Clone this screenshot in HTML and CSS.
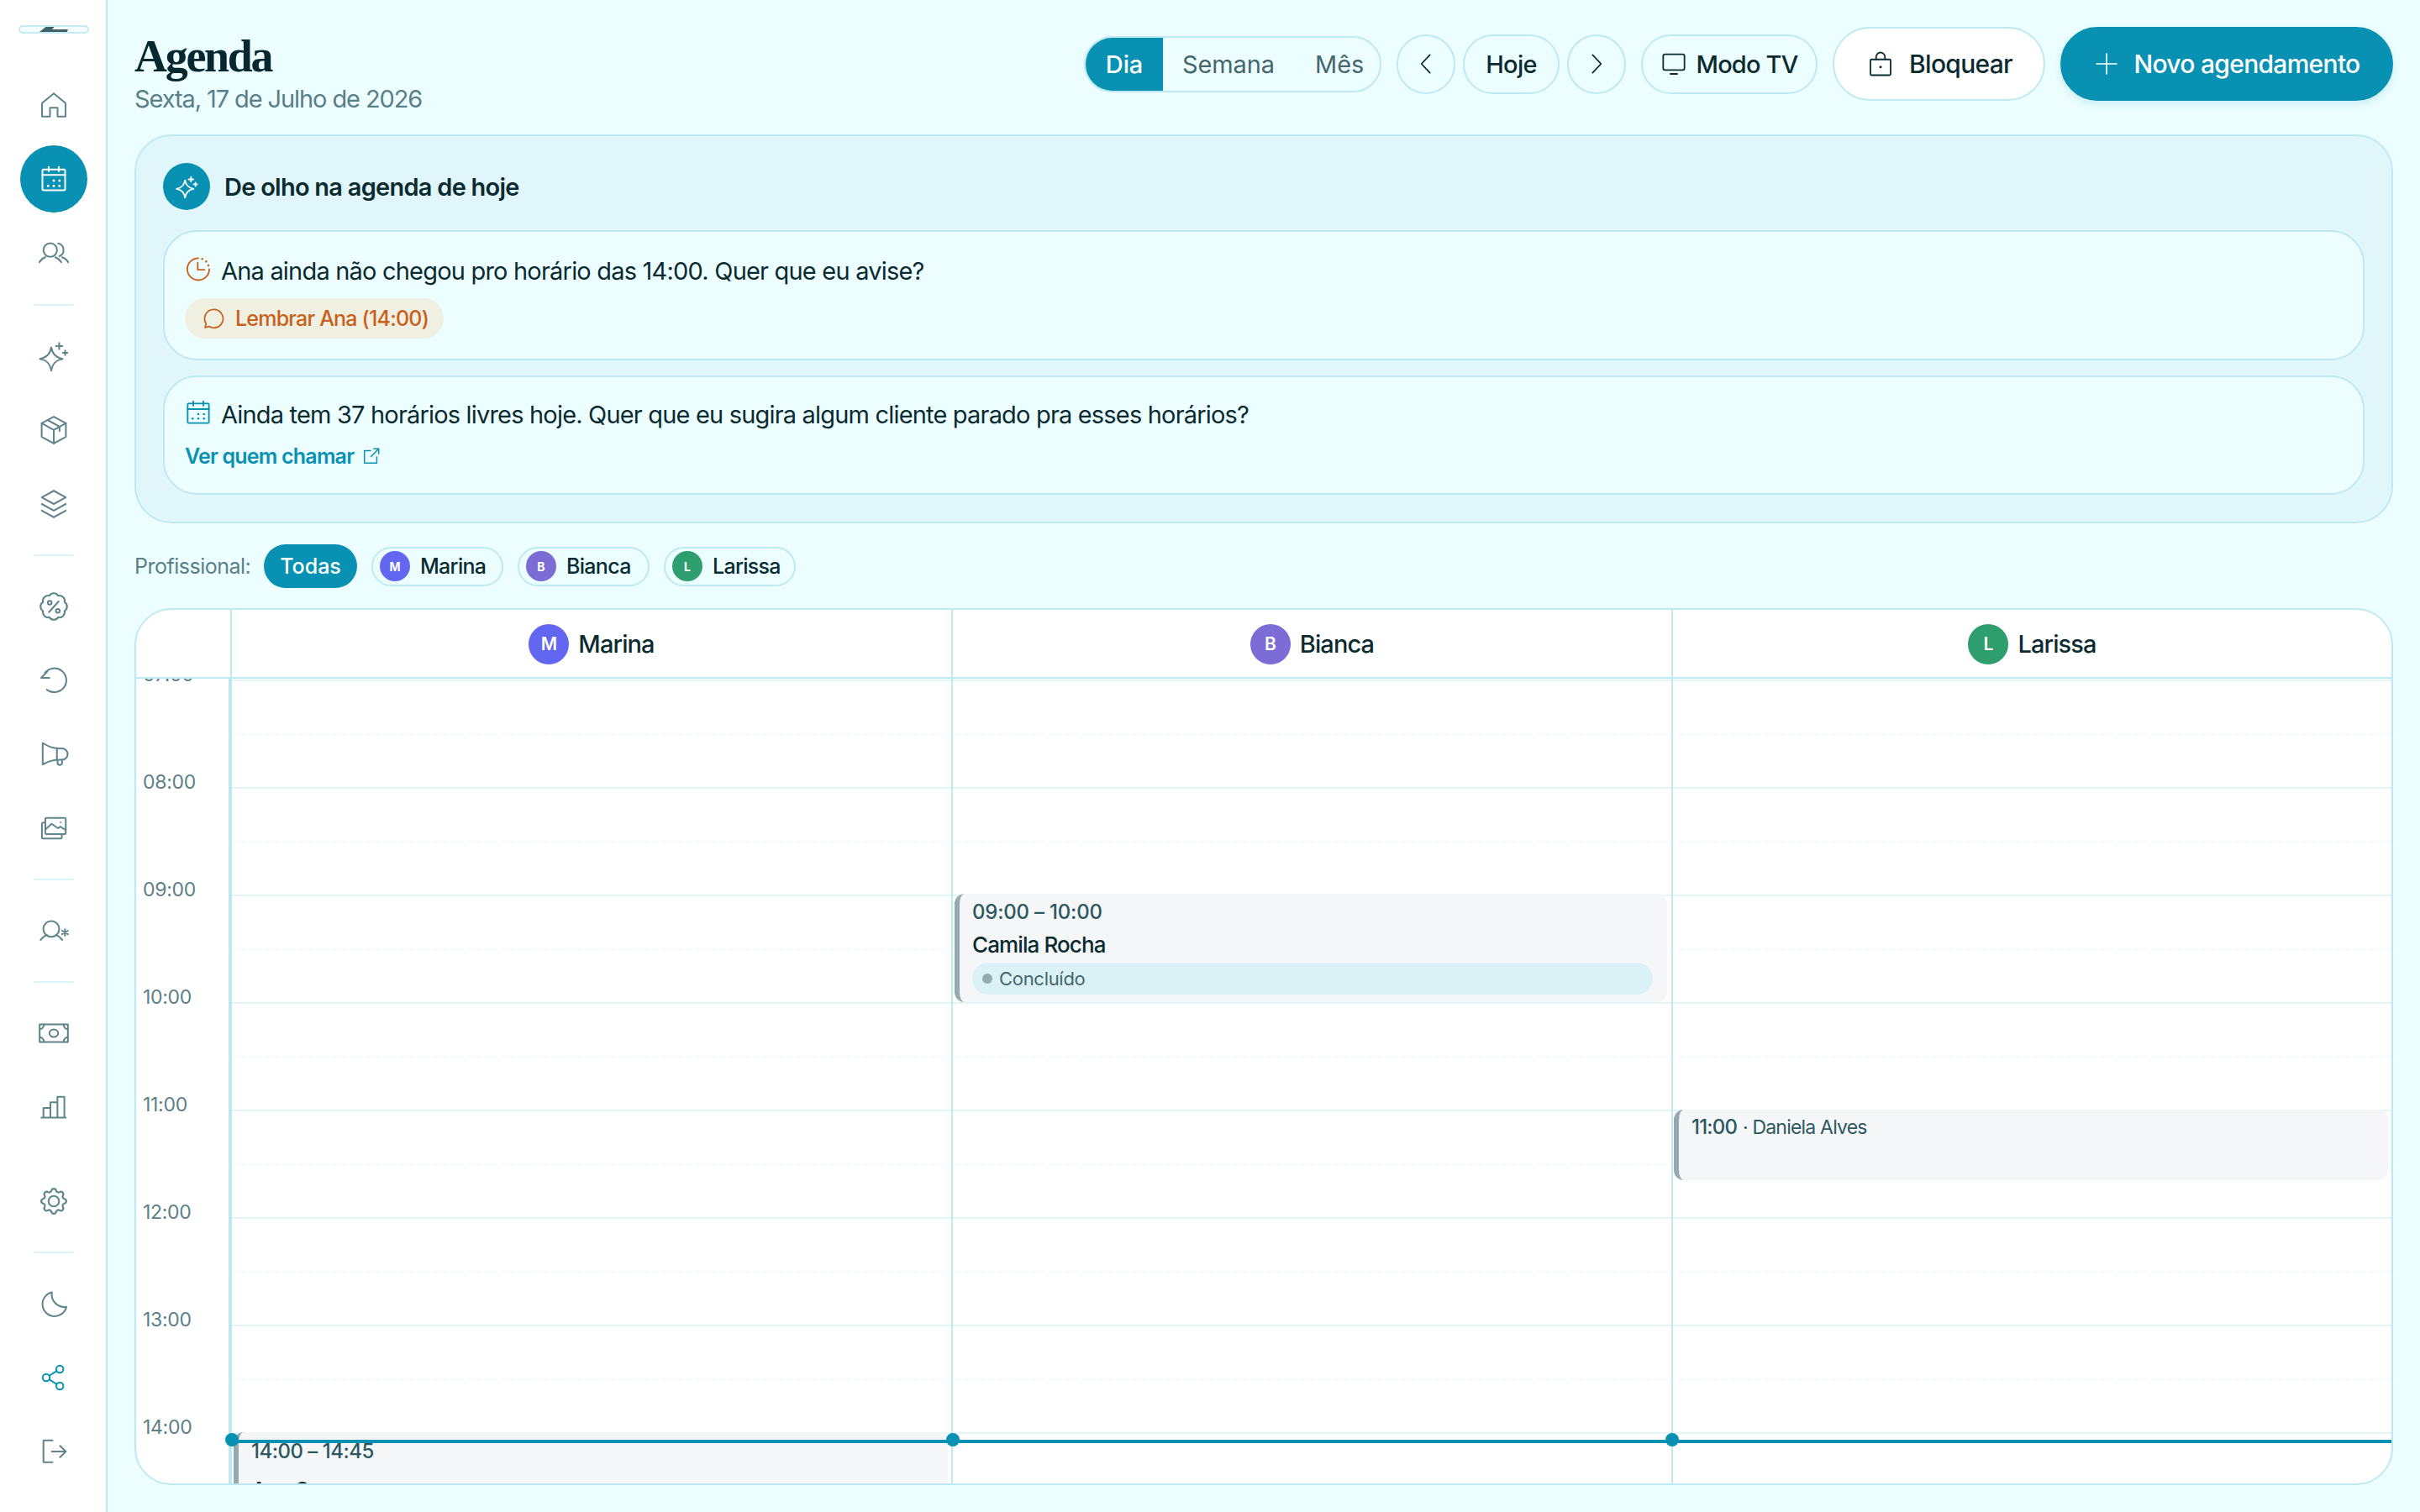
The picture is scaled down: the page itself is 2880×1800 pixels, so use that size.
FILE: index.html
```html
<!DOCTYPE html>
<html lang="pt-BR">
<head>
  <meta charset="UTF-8">
  <meta name="viewport" content="width=device-width, initial-scale=1.0">
  <title>Agenda</title>
  <link rel="stylesheet" href="styles.css">
</head>
<body>
  <div class="app">

    <!-- menu lateral -->
    <nav class="sidebar">
      <div class="logo"><span class="logo-mark"></span></div>

      <a class="nav-item"><svg viewBox="0 0 24 24"><path d="M2.700 10.500 12 2.800l9.300 7.700v10.700H15v-7H9v7H2.700z"/></svg></a>
      <a class="nav-item active"><svg viewBox="0 0 24 24"><rect x="3" y="4.500" width="18" height="16.500" rx="1"/><path d="M3 8.800h18M8 2.500V6M16 2.500V6"/><path class="dots" d="M7.500 17.500h.01M12 17.500h.01M16.500 17.500h.01M12 13.300h.01M16.500 13.300h.01"/></svg></a>
      <a class="nav-item"><svg viewBox="0 0 24 24"><circle cx="9.200" cy="9.800" r="5.400"/><path d="M.5 19.500c1.200-2 2.800-3.300 4.800-4M18 19.500c-1.200-2-2.800-3.300-4.800-4M15.500 4.500a5.400 5.400 0 0 1 1 10.200M23.500 19.500c-.9-1.700-2.500-3.200-5-4"/></svg></a>
      <hr class="nav-sep">

      <a class="nav-item"><svg viewBox="0 0 24 24"><path d="M10 5c.9 5.200 3.200 7.600 9 9.200-5.800 1-8.100 3.900-9 9.300-.9-5.400-3.200-8.300-9-9.300 5.800-1.600 8.100-4 9-9.200z"/><path d="M16.300 1.500v5M13.800 4h5M21 7.500v3.600M19.200 9.300h3.600"/></svg></a>
      <a class="nav-item"><svg viewBox="0 0 24 24"><path d="M12 1.400l9.600 5.200v10.800L12 22.600l-9.600-5.200V6.600z"/><path d="M2.400 6.600l9.600 5.300 9.600-5.300M12 11.900v10.700M7 4l9.600 5.300v3.500"/></svg></a>
      <a class="nav-item"><svg viewBox="0 0 24 24"><path d="M12 1.500l9.500 5.200-9.500 5.300-9.500-5.300z"/><path d="M2.500 12l9.500 5.300 9.500-5.300M2.500 17.200l9.500 5.300 9.500-5.300"/></svg></a>
      <hr class="nav-sep">

      <a class="nav-item"><svg viewBox="0 0 24 24"><path transform="translate(-.6 -.6) scale(1.050)" d="M3.850 8.620a4 4 0 0 1 4.780-4.770 4 4 0 0 1 6.740 0 4 4 0 0 1 4.780 4.780 4 4 0 0 1 0 6.740 4 4 0 0 1-4.770 4.780 4 4 0 0 1-6.750 0 4 4 0 0 1-4.780-4.770 4 4 0 0 1 0-6.760z"/><path d="M15.800 8l-7.600 8.500"/><circle cx="8.800" cy="9" r="1.500"/><circle cx="15.200" cy="15.500" r="1.500"/></svg></a>
      <a class="nav-item"><svg viewBox="0 0 24 24"><path d="M5 6A9.500 9.500 0 1 1 6.500 19.300"/><path d="M2 10l4.800-5M2 10h6.500"/></svg></a>
      <a class="nav-item"><svg viewBox="0 0 24 24"><path d="M3.200 3c4.800 3 7.800 4.300 13.300 4.300h2a4.500 4.500 0 0 1 0 9h-2c-5.500 0-8.500 1-13.300 3.700z"/><path d="M14.500 7.500v9M15 16.500v2.200a1.800 1.800 0 0 0 3.600 0v-2.400"/></svg></a>
      <a class="nav-item"><svg viewBox="0 0 24 24"><rect x="5.300" y="3.900" width="16.200" height="12.800" rx=".8"/><path d="M5.300 13l5-4.500 5 3.500 2-1.300 4.200 2.800M17.500 7.300h.01"/><path d="M5.300 7.500H3.500a.9.900 0 0 0-.9.900v10.900a.9.900 0 0 0 .9.900h14a.9.900 0 0 0 .9-.9v-2.600"/></svg></a>
      <hr class="nav-sep">

      <a class="nav-item"><svg viewBox="0 0 24 24"><circle cx="10" cy="10.600" r="6.300"/><path d="M1.600 19.300c1.300-2 3-3.200 5-3.900M18.700 19.300c-1.300-2-3-3.200-5-3.900"/><path d="M20.900 10.800v5.200M18.600 12l4.600 2.800M23.200 12l-4.600 2.800"/></svg></a>
      <hr class="nav-sep">

      <a class="nav-item"><svg viewBox="0 0 24 24"><rect x=".8" y="5" width="22.400" height="14"/><ellipse cx="12" cy="12" rx="3.400" ry="3"/><path d="M.8 8.800c1.800 0 3.400-1.600 3.400-3.800M23.200 8.800c-1.800 0-3.400-1.600-3.400-3.800M.8 15.200c1.800 0 3.400 1.600 3.400 3.800M23.200 15.200c-1.800 0-3.400 1.600-3.400 3.800"/></svg></a>
      <a class="nav-item"><svg viewBox="0 0 24 24"><path d="M2.200 20.400h19.300M3.800 20.400v-7.700h5.500v7.700M9.300 20.400V8.200h5.600v12.200M14.900 8.200V3.800h5.500v16.600"/></svg></a>

      <div class="nav-spacer"></div>
      <a class="nav-item"><svg viewBox="0 0 24 24"><path transform="translate(-1.200 -1.200) scale(1.100)" d="M10.325 4.317c.426-1.756 2.924-1.756 3.350 0a1.724 1.724 0 0 0 2.573 1.066c1.543-.940 3.310.826 2.370 2.370a1.724 1.724 0 0 0 1.065 2.572c1.756.426 1.756 2.924 0 3.350a1.724 1.724 0 0 0-1.066 2.573c.940 1.543-.826 3.310-2.370 2.370a1.724 1.724 0 0 0-2.572 1.065c-.426 1.756-2.924 1.756-3.350 0a1.724 1.724 0 0 0-2.573-1.066c-1.543.940-3.310-.826-2.370-2.370a1.724 1.724 0 0 0-1.065-2.572c-1.756-.426-1.756-2.924 0-3.350a1.724 1.724 0 0 0 1.066-2.573c-.940-1.543.826-3.310 2.370-2.370 1 .608 2.296.070 2.572-1.065z"/><circle cx="12" cy="12" r="4.200"/></svg></a>
      <hr class="nav-sep">

      <a class="nav-item"><svg viewBox="0 0 24 24"><path d="M10.500 3A9.600 9.600 0 1 0 22 14.500 10 10 0 0 1 10.500 3z"/></svg></a>
      <a class="nav-item share"><svg viewBox="0 0 24 24"><circle cx="16.800" cy="5.300" r="2.800"/><circle cx="6" cy="12" r="2.800"/><circle cx="16.800" cy="18.700" r="2.800"/><path d="M8.500 10.500l5.800-3.700M8.500 13.500l5.800 3.700"/></svg></a>
      <a class="nav-item"><svg viewBox="0 0 24 24"><path d="M11 3.200H3.800v17.300H11M10.500 12h11M17 7.500l4.600 4.500-4.600 4.500"/></svg></a>
    </nav>

    <main class="main">

      <!-- cabeçalho -->
      <header class="topbar">
        <div class="page-title">
          <h1>Agenda</h1>
          <p>Sexta, 17 de Julho de 2026</p>
        </div>
        <div class="actions">
          <div class="segmented">
            <button class="seg on">Dia</button>
            <button class="seg">Semana</button>
            <button class="seg">Mês</button>
          </div>
          <div class="date-nav">
            <button class="btn square"><svg viewBox="0 0 24 24"><path d="M15.500 4l-7.500 8 7.500 8"/></svg></button>
            <button class="btn today">Hoje</button>
            <button class="btn square"><svg viewBox="0 0 24 24"><path d="M8.500 4l7.500 8-7.500 8"/></svg></button>
          </div>
          <button class="btn tv"><svg viewBox="0 0 24 24"><rect x="2.500" y="3.500" width="19" height="14" rx="1.500"/><path d="M9 21h6"/></svg>Modo TV</button>
          <button class="btn big"><svg viewBox="0 0 24 24"><rect x="4" y="8.500" width="16" height="12.500" rx=".8"/><path d="M8.500 8.500V6.500a3.500 3.500 0 0 1 7 0v2"/><path class="dots" d="M12 14.500h.01"/></svg>Bloquear</button>
          <button class="btn big primary"><svg viewBox="0 0 24 24"><path d="M12 3v18M3 12h18"/></svg>Novo agendamento</button>
        </div>
      </header>

      <!-- sugestões -->
      <section class="insights">
        <div class="insights-head">
          <span class="spark"><svg viewBox="0 0 24 24"><path d="M10 5c.9 5.200 3.200 7.600 9 9.200-5.800 1-8.100 3.900-9 9.300-.9-5.400-3.200-8.300-9-9.300 5.800-1.600 8.100-4 9-9.200z"/><path d="M16.300 1.500v5M13.800 4h5M21 7.500v3.600M19.200 9.300h3.600"/></svg></span>
          <h2>De olho na agenda de hoje</h2>
        </div>
        <div class="insight">
          <div class="insight-line">
            <svg class="orange" viewBox="0 0 24 24"><path d="M12 2.500a9.800 9.800 0 1 0 9.800 9.800"/><path d="M11.500 6.500v6.300h6"/><path class="dots" d="M15.500 3.200h.01M19 5.500h.01M21 9h.01"/></svg>
            Ana ainda não chegou pro horário das 14:00. Quer que eu avise?
          </div>
          <a class="remind"><svg viewBox="0 0 24 24"><path d="M12.500 3a9.300 9.300 0 1 1-4.700 17.300l-4.300 1 1-4A9.300 9.300 0 0 1 12.500 3z"/></svg>Lembrar Ana (14:00)</a>
        </div>
        <div class="insight second">
          <div class="insight-line">
            <svg class="blue" viewBox="0 0 24 24"><rect x="2.500" y="4" width="19" height="17.500" rx=".8"/><path d="M2.500 9h19M7.500 2v4M16.500 2v4"/><path class="dots" d="M7 17.500h.01M12 17.500h.01M17 17.500h.01M12 13.500h.01M17 13.500h.01"/></svg>
            Ainda tem 37 horários livres hoje. Quer que eu sugira algum cliente parado pra esses horários?
          </div>
          <a class="call">Ver quem chamar <svg viewBox="0 0 24 24"><path d="M11 5H3v16h16v-8M11.500 12.500 21.500 2.500M15 2.500h6.500V9"/></svg></a>
        </div>
      </section>

      <!-- filtro -->
      <div class="filters">
        <span class="filters-label">Profissional:</span>
        <button class="chip-all">Todas</button>
        <button class="chip"><span class="avatar small marina">M</span>Marina</button>
        <button class="chip"><span class="avatar small bianca">B</span>Bianca</button>
        <button class="chip"><span class="avatar small larissa">L</span>Larissa</button>
      </div>

      <!-- calendário -->
      <section class="calendar">
        <div class="cal-head">
          <div class="corner"></div>
          <div class="cal-pro"><span class="avatar marina">M</span>Marina</div>
          <div class="cal-pro"><span class="avatar bianca">B</span>Bianca</div>
          <div class="cal-pro"><span class="avatar larissa">L</span>Larissa</div>
        </div>
        <div class="cal-body">
          <div class="times">
            <div>07:00</div><div>08:00</div><div>09:00</div><div>10:00</div>
            <div>11:00</div><div>12:00</div><div>13:00</div><div>14:00</div>
          </div>
          <div class="lines">
            <div></div><div></div><div></div><div></div>
            <div></div><div></div><div></div><div></div>
          </div>
          <div class="col col-1">
            <div class="event ana">
              <div class="ev-time">14:00 – 14:45</div>
              <div class="ev-name">Ana Souza</div>
            </div>
          </div>
          <div class="col col-2">
            <div class="event camila">
              <div class="ev-time">09:00 – 10:00</div>
              <div class="ev-name">Camila Rocha</div>
              <div class="ev-status"><i></i>Concluído</div>
            </div>
          </div>
          <div class="col col-3">
            <div class="event daniela">
              <div><span class="ev-time">11:00</span> <span class="ev-client">· Daniela Alves</span></div>
            </div>
          </div>
          <div class="now">
            <i class="d1"></i><i class="d2"></i><i class="d3"></i>
          </div>
        </div>
      </section>
    </main>
  </div>
</body>
</html>
```

FILE: styles.css
```css
* {
  box-sizing: border-box;
}
html, body {
  margin: 0;
  height: 100%;
}
body {
  font-family: Inter, "Noto Sans", sans-serif;
  color: #0b2b31;
  background: #ecfeff;
  overflow: hidden;
}
button {
  font: inherit;
  color: inherit;
  cursor: pointer;
}
svg {
  fill: none;
  stroke: currentColor;
  stroke-width: 1.35;
  stroke-linecap: round;
  stroke-linejoin: round;
}
.dots {
  stroke-width: 2;
}
.app {
  display: flex;
  width: 2880px;
  height: 1800px;
}

/* menu lateral */
.sidebar {
  width: 128px;
  flex: none;
  background: #fff;
  border-right: 2px solid #bfe9f0;
  padding: 30px 22px 32px 24px;
  display: flex;
  flex-direction: column;
  align-items: center;
  color: #5f858c;
}
.logo {
  width: 84px;
  height: 10px;
  margin-bottom: 45px;
  border: 2px solid #c5ebf1;
  border-radius: 6px;
  background: #f4fdfe;
  display: flex;
  justify-content: center;
  flex: none;
}
.logo-mark {
  width: 34px;
  height: 6px;
  background: #3f626a;
  clip-path: polygon(0 100%, 22% 0, 52% 0, 44% 50%, 100% 50%, 96% 100%);
}
.nav-item {
  width: 80px;
  height: 80px;
  flex: none;
  margin-bottom: 8px;
  border-radius: 50%;
  display: flex;
  align-items: center;
  justify-content: center;
}
.nav-item:last-child {
  margin-bottom: 0;
}
.nav-item svg {
  width: 36px;
  height: 36px;
}
.nav-item.active {
  background: #0891b2;
  color: #fff;
}
.nav-item.share {
  color: #0891b2;
}
.nav-sep {
  width: 48px;
  height: 2px;
  flex: none;
  border: 0;
  margin: 12px 0 20px;
  background: #daf3f6;
}
.nav-sep:first-of-type {
  margin-top: 13px;
}
.nav-spacer {
  height: 24px;
  flex: none;
}

/* conteúdo */
.main {
  flex: 1;
  min-width: 0;
  padding: 32px 32px 32px;
  display: flex;
  flex-direction: column;
}
.topbar {
  height: 88px;
  flex: none;
  margin-bottom: 40px;
  display: flex;
  justify-content: space-between;
  align-items: center;
}
.page-title {
  align-self: flex-start;
  margin-top: 6px;
}
.page-title h1 {
  margin: 0;
  font-family: "Liberation Serif", serif;
  font-weight: 700;
  font-size: 54px;
  line-height: 58px;
  letter-spacing: -2.3px;
  color: #07282e;
}
.page-title p {
  margin: 4px 0 0;
  font-size: 29px;
  line-height: 36px;
  letter-spacing: -1.1px;
  color: #5b7f87;
}
.actions {
  display: flex;
  align-items: center;
  gap: 18px;
}
.date-nav {
  display: flex;
  align-items: center;
  gap: 9px;
}
.segmented {
  width: 354px;
  height: 67px;
  display: flex;
  align-items: stretch;
  border: 2px solid #bfe9f0;
  border-radius: 34px;
  overflow: hidden;
  font-size: 29px;
}
.seg {
  border: 0;
  background: none;
  color: #46666d;
  padding: 0 23px;
  letter-spacing: -0.1px;
}
.seg:nth-child(3) {
  padding: 0 0 0 25px;
}
.seg.on {
  width: 92px;
  padding: 0;
  background: #0891b2;
  color: #fff;
  font-weight: 500;
}
.btn {
  height: 71px;
  background: #ecfeff;
  border: 2px solid #bfe9f0;
  border-radius: 36px;
  font-size: 29px;
  font-weight: 450;
  letter-spacing: -0.7px;
  display: flex;
  align-items: center;
  justify-content: center;
  padding: 0;
}
.btn svg {
  width: 32px;
  height: 32px;
}
.btn.square {
  width: 70px;
}
.btn.today {
  width: 115px;
}
.btn.tv {
  width: 210px;
  gap: 10px;
  letter-spacing: -0.8px;
}
.btn.big {
  height: 88px;
  width: 253px;
  border-radius: 44px;
  background: #fff;
  font-size: 30px;
  gap: 16px;
}
.btn.big svg {
  width: 36px;
  height: 36px;
  stroke-width: 1.2;
}
.btn.primary {
  width: 396px;
  background: #0891b2;
  border-color: #0891b2;
  color: #fff;
  gap: 16px;
  box-shadow: 0 4px 10px rgba(8, 145, 178, 0.15);
}
.btn.primary svg {
  width: 32px;
  height: 32px;
}

/* sugestões */
.insights {
  flex: none;
  height: 463px;
  background: #e1f6fa;
  border: 2px solid #bfe9f0;
  border-radius: 44px;
  padding: 32px;
}
.insights-head {
  display: flex;
  align-items: center;
  gap: 17px;
  height: 56px;
  margin-bottom: 24px;
}
.spark {
  width: 56px;
  height: 56px;
  border-radius: 50%;
  background: #0891b2;
  color: #fff;
  display: flex;
  align-items: center;
  justify-content: center;
}
.spark svg {
  width: 27px;
  height: 27px;
  stroke-width: 1.6;
}
.insights-head h2 {
  margin: 0;
  font-size: 29px;
  font-weight: 600;
  letter-spacing: -0.75px;
}
.insight {
  height: 155px;
  background: #ecfeff;
  border: 2px solid #bfe9f0;
  border-radius: 40px;
  padding: 26px 24px 0;
}
.insight.second {
  height: 142px;
  margin-top: 18px;
  padding-top: 24px;
}
.insight-line {
  display: flex;
  align-items: center;
  gap: 11px;
  height: 40px;
  font-size: 29px;
  letter-spacing: -0.8px;
}
.second .insight-line {
  letter-spacing: -0.82px;
}
.insight-line svg {
  width: 32px;
  height: 32px;
  flex: none;
  margin-top: -4px;
  stroke-width: 1.4;
}
.orange {
  color: #c8601a;
}
.blue {
  color: #0891b2;
}
.remind {
  display: inline-flex;
  align-items: center;
  gap: 12px;
  height: 48px;
  margin-top: 13px;
  padding: 0 18px 0 20px;
  border-radius: 24px;
  background: #f0f0e2;
  color: #c8601a;
  font-size: 25px;
  font-weight: 500;
  letter-spacing: -0.8px;
}
.remind svg {
  width: 28px;
  height: 28px;
  stroke-width: 1.5;
}
.call {
  display: flex;
  align-items: center;
  gap: 10px;
  margin-top: 12px;
  height: 36px;
  color: #0891b2;
  font-size: 25px;
  font-weight: 600;
  letter-spacing: -0.8px;
}
.call svg {
  width: 22px;
  height: 22px;
  stroke-width: 1.6;
}

/* filtro */
.filters {
  flex: none;
  height: 52px;
  margin: 25px 0 24px;
  display: flex;
  align-items: center;
  gap: 17px;
  font-size: 25px;
}
.filters-label {
  color: #5b7f87;
  width: 137px;
  letter-spacing: -0.5px;
}
.chip-all {
  width: 111px;
  height: 52px;
  border: 0;
  border-radius: 26px;
  background: #0891b2;
  color: #fff;
  font-weight: 500;
}
.chip {
  width: 157px;
  height: 47px;
  padding: 0 0 0 8px;
  background: none;
  border: 2px solid #bfe9f0;
  border-radius: 24px;
  display: flex;
  align-items: center;
  gap: 12px;
  font-weight: 450;
  letter-spacing: -0.7px;
}
.avatar {
  flex: none;
  width: 48px;
  height: 48px;
  border-radius: 50%;
  color: #fff;
  font-size: 21px;
  font-weight: 600;
  letter-spacing: 0;
  display: flex;
  align-items: center;
  justify-content: center;
}
.avatar.small {
  width: 36px;
  height: 36px;
  font-size: 14px;
  font-weight: 700;
}
.marina {
  background: #6366f1;
}
.bianca {
  background: #7c6cd6;
}
.larissa {
  background: #2f9e6e;
}

/* calendário */
.calendar {
  flex: 1;
  min-height: 0;
  position: relative;
  background: #fff;
  border: 2px solid #bfe9f0;
  border-radius: 44px;
  overflow: hidden;
}
.cal-head {
  display: grid;
  grid-template-columns: 114px 858px 857px 1fr;
  height: 82px;
  border-bottom: 2px solid #bfe9f0;
}
.corner {
  border-right: 2px solid #bfe9f0;
}
.cal-pro {
  display: flex;
  align-items: center;
  justify-content: center;
  gap: 11px;
  padding-top: 1px;
  font-size: 29px;
  font-weight: 450;
  letter-spacing: -0.9px;
  border-right: 2px solid #bfe9f0;
}
.cal-pro:last-child {
  border-right: 0;
}
.cal-body {
  position: relative;
  height: 1000px;
  overflow: hidden;
  display: grid;
  grid-template-columns: 114px 858px 857px 1fr;
  grid-template-rows: 1fr;
}
.times {
  grid-column: 1;
  grid-row: 1;
  margin-top: -19px;
  padding-left: 8px;
  border-right: 4px solid #bfe9f0;
  font-size: 23px;
  color: #5b7f87;
  letter-spacing: -0.3px;
}
.times div {
  height: 128px;
  line-height: 28px;
}
.lines {
  grid-column: 2 / 5;
  grid-row: 1;
  padding-top: 1px;
}
.lines div {
  height: 128px;
  border-top: 2px solid #e2f6f8;
  position: relative;
}
.lines div::after {
  content: "";
  position: absolute;
  left: 0;
  right: 0;
  top: 62px;
  border-top: 2px dashed #f1fbfc;
}
.col {
  grid-row: 1;
  position: relative;
  border-right: 2px solid #bfe9f0;
}
.col-1 { grid-column: 2; }
.col-2 { grid-column: 3; }
.col-3 { grid-column: 4; border-right: 0; }

.event {
  position: absolute;
  background: #f4f6f8;
  border-left: 6px solid #94a9b0;
  border-radius: 12px;
  padding: 8px 0 0 15px;
  overflow: hidden;
}
.camila {
  top: 256px;
  left: 2px;
  right: 5px;
  height: 129px;
}
.daniela {
  top: 513px;
  left: 1px;
  right: 4px;
  height: 84px;
  padding-top: 6px;
  font-size: 24px;
}
.ana {
  top: 897px;
  left: 2px;
  right: 4px;
  height: 96px;
  padding-top: 9px;
}
.ev-time {
  font-size: 24px;
  line-height: 28px;
  font-weight: 500;
  letter-spacing: -0.2px;
  color: #2e5860;
}
.ana .ev-time {
  letter-spacing: -0.5px;
}
.ev-name {
  font-size: 26px;
  line-height: 32px;
  margin-top: 9px;
  font-weight: 450;
  letter-spacing: -0.9px;
}
.ev-client {
  font-size: 23px;
  letter-spacing: -0.8px;
  color: #2e5860;
}
.daniela .ev-time {
  letter-spacing: -0.8px;
}
.ana .ev-name {
  margin-top: 16px;
}
.ev-status {
  height: 38px;
  width: 810px;
  margin-top: 5px;
  padding-left: 12px;
  border-radius: 19px;
  background: #daf2f5;
  color: #46666d;
  font-size: 22px;
  letter-spacing: -0.3px;
  display: flex;
  align-items: center;
  gap: 8px;
}
.ev-status i {
  width: 12px;
  height: 12px;
  border-radius: 50%;
  background: #94a9b0;
}

/* linha de agora */
.now {
  position: absolute;
  left: 114px;
  right: 0;
  top: 906px;
  height: 4px;
  background: #0891b2;
}
.now i {
  position: absolute;
  top: -8px;
  width: 16px;
  height: 16px;
  border-radius: 50%;
  background: #0891b2;
}
.now .d1 { left: -8px; }
.now .d2 { left: 850px; }
.now .d3 { left: 1706px; }
```
